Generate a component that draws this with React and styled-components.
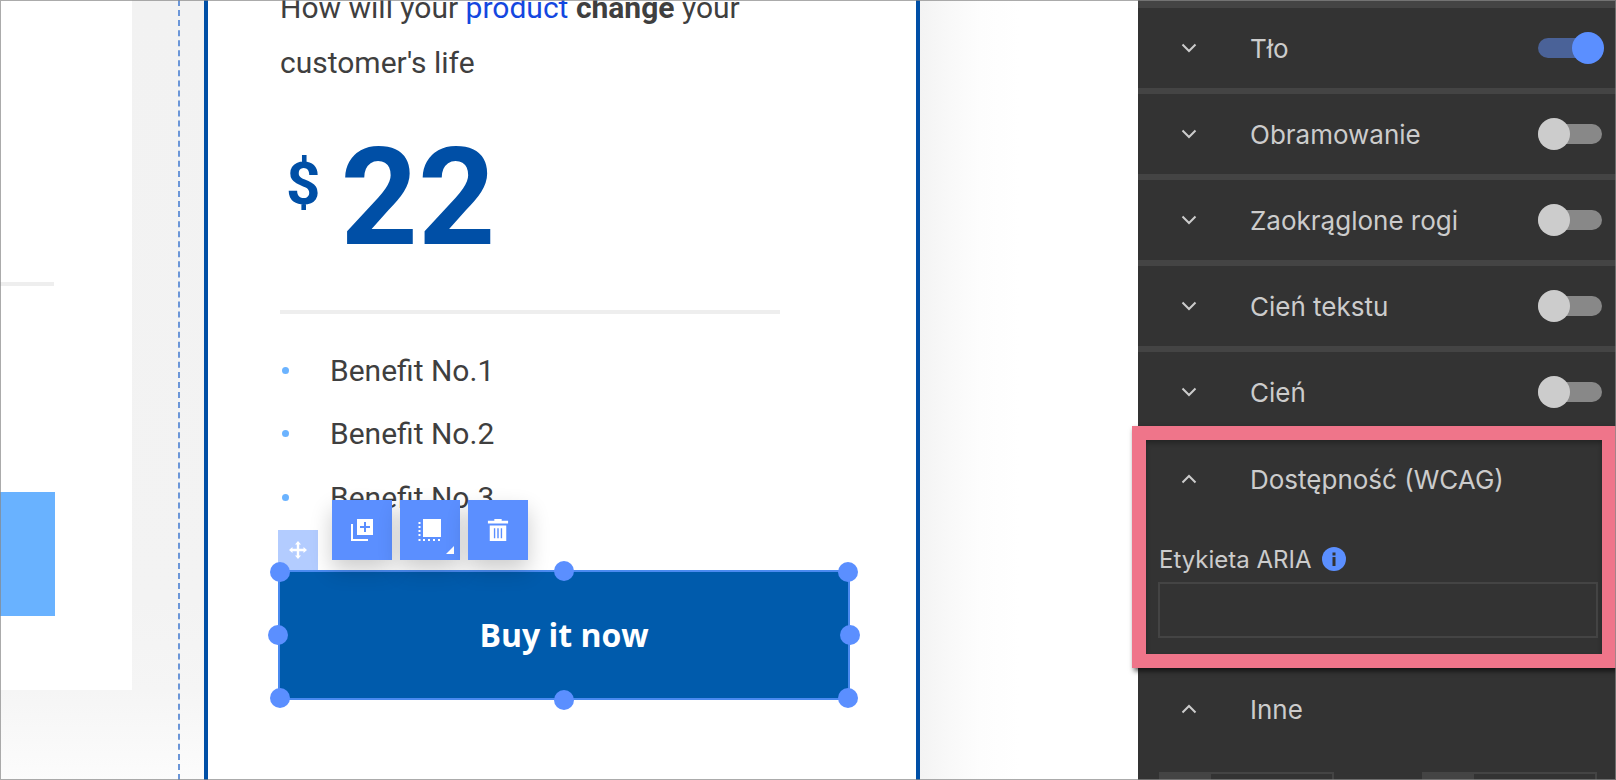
import React from 'react';
import styled, { createGlobalStyle } from 'styled-components';

const Global = createGlobalStyle`
  html, body { margin: 0; padding: 0; background: #fff; }
  #root { width: 1616px; height: 780px; }
`;

const Page = styled.div`
  position: relative;
  display: flex;
  width: 1616px;
  height: 780px;
  overflow: hidden;
`;

const Frame = styled.div`
  position: absolute;
  inset: 0;
  border: 1px solid rgba(136, 136, 136, 0.7);
  pointer-events: none;
  z-index: 10;
`;

const Canvas = styled.main`
  display: flex;
  width: 1138px;
  height: 780px;
  overflow: hidden;
  background: linear-gradient(to bottom, #f2f2f2 0, #f3f3f3 600px, #f5f5f5 690px, #fcfcfc 780px);
`;

const LeftPanel = styled.div`
  width: 132px;
  height: 690px;
  flex: none;
  background: #fff;
`;

const LeftDivider = styled.div`
  width: 54px;
  height: 4px;
  margin-top: 282px;
  background: #eeeeee;
`;

const LeftBlock = styled.div`
  width: 55px;
  height: 124px;
  margin-top: 206px;
  background: #69b2ff;
`;

const Gutter = styled.div`
  width: 72px;
  flex: none;
  padding-left: 46px;
  box-sizing: border-box;
`;

const DashedLine = styled.div`
  width: 0;
  height: 100%;
  border-left: 2px dashed #6b96d8;
`;

const Card = styled.section`
  width: 716px;
  flex: none;
  box-sizing: border-box;
  border-left: 4px solid #004fa6;
  border-right: 4px solid #004fa6;
  background: #fff;
  padding-left: 72px;
  font-family: Roboto, sans-serif;
  color: #3f3f3f;
`;

const Heading = styled.p`
  margin: -19px 0 0;
  width: 480px;
  font-size: 30px;
  line-height: 54.5px;
`;

const Accent = styled.span`
  color: #1447e0;
`;

const Price = styled.div`
  display: flex;
  align-items: flex-start;
  margin-top: 40.5px;
  color: #004fa6;
  font-weight: 700;
`;

const Currency = styled.span`
  margin: 23px 20px 0 6px;
  font-size: 60px;
  line-height: 1;
`;

const Amount = styled.span`
  font-size: 135px;
  line-height: 1;
`;

const Divider = styled.div`
  width: 500px;
  height: 4px;
  margin-top: 44.5px;
  background: #eeeeee;
`;

const Benefits = styled.ul`
  list-style: none;
  margin: 24.5px 0 0;
  padding: 0;
`;

const Benefit = styled.li`
  display: flex;
  align-items: center;
  height: 63.5px;
  font-size: 30px;
`;

const Dot = styled.span`
  width: 7px;
  height: 7px;
  margin: 0 41px 0 2px;
  border-radius: 50%;
  background: #6bb3ff;
`;

const BuyButton = styled.div`
  position: relative;
  width: 572px;
  height: 130px;
  margin: 41px 0 0 -2px;
  padding-bottom: 1px;
  box-sizing: border-box;
  border: 2px solid #4a8af0;
  background: #005bac;
  display: flex;
  align-items: center;
  justify-content: center;
  color: #fff;
  font-family: 'Open Sans', sans-serif;
  font-weight: 700;
  font-size: 32px;
`;

const Toolbar = styled.div`
  position: absolute;
  left: 52px;
  top: -72px;
  display: flex;
  gap: 8px;
`;

const ToolButton = styled.div`
  position: relative;
  width: 60px;
  height: 60px;
  display: flex;
  align-items: center;
  justify-content: center;
  background: #5b8fff;
  box-shadow: 0 10px 22px rgba(0, 0, 0, 0.2);
`;

const CornerMark = styled.span`
  position: absolute;
  right: 6px;
  bottom: 6px;
  width: 0;
  height: 0;
  border-left: 8px solid transparent;
  border-bottom: 8px solid #fff;
`;

const MoveHandle = styled.div`
  position: absolute;
  left: -2px;
  top: -42px;
  width: 40px;
  height: 40px;
  display: flex;
  align-items: center;
  justify-content: center;
  background: #b3ccff;
`;

const Handle = styled.span`
  position: absolute;
  width: 20px;
  height: 20px;
  border-radius: 50%;
  background: #5b8fff;
  left: ${p => p.$x}px;
  top: ${p => p.$y}px;
`;

const Gradient = styled.div`
  flex: 1;
  background: linear-gradient(to right, #f3f3f3 0, #f9f9f9 30px, #fdfdfd 60px, #fff 100px);
`;

const Sidebar = styled.aside`
  position: relative;
  z-index: 5;
  width: 478px;
  height: 780px;
  flex: none;
  background: #333333;
  color: #cccccc;
  font-family: Inter, sans-serif;
`;

const Section = styled.div`
  border-top: ${p => p.$sep}px solid #444444;
`;

const Row = styled.div`
  display: flex;
  align-items: center;
  height: 80px;
  padding-left: 42px;
  font-size: 26px;
`;

const RowLabel = styled.span`
  margin-top: ${p => (p.$flat ? 0 : 1)}px;
`;

const Chevron = styled.svg`
  width: 18px;
  height: 12px;
  margin-right: 52px;
  flex: none;
  fill: none;
  stroke: #cccccc;
  stroke-width: 2;
`;

const Toggle = styled.div`
  position: relative;
  width: 66px;
  height: 32px;
  margin-left: auto;
  margin-right: 12px;
  display: flex;
  align-items: center;
`;

const Track = styled.span`
  width: ${p => (p.$on ? 50 : 64)}px;
  height: 20px;
  border-radius: 10px;
  background: ${p => (p.$on ? '#4a6298' : '#888888')};
`;

const Thumb = styled.span`
  position: absolute;
  top: 0;
  left: ${p => (p.$on ? 34 : 0)}px;
  width: 32px;
  height: 32px;
  border-radius: 50%;
  background: ${p => (p.$on ? '#5b8fff' : '#cccccc')};
`;

const Wcag = styled.div`
  position: relative;
  margin-top: 7px;
`;

const Highlight = styled.div`
  position: absolute;
  left: -6px;
  right: 0;
  top: -13px;
  height: 242px;
  box-sizing: border-box;
  border: 14px solid #ef758a;
  pointer-events: none;
  box-shadow: 2px 3px 5px rgba(0, 0, 0, 0.65), inset 0 3px 5px rgba(0, 0, 0, 0.3);
`;

const FieldLabel = styled.div`
  display: flex;
  align-items: center;
  gap: 10px;
  height: 24px;
  margin: 28px 0 0 21px;
  font-size: 24px;
`;

const FieldText = styled.span`
  margin-top: 1px;
`;

const Info = styled.svg`
  width: 24px;
  height: 24px;
  flex: none;
`;

const TextField = styled.div`
  width: 440px;
  height: 56px;
  margin: 11px 0 31px 20px;
  box-sizing: border-box;
  border: 2px solid #444444;
`;

const Units = styled.div`
  display: flex;
  gap: 88px;
  margin: 23px 0 0 21px;
`;

const Unit = styled.div`
  display: flex;
  width: 175px;
  height: 40px;
  box-sizing: border-box;
  border: 2px solid #444444;
`;

const UnitLabel = styled.div`
  width: 50px;
  background: #444444;
`;

const ChevronIcon = ({ up }) => (
  <Chevron viewBox="0 0 18 12">
    <path d={up ? 'M2.5 9.5 L9 3 L15.5 9.5' : 'M2.5 2.5 L9 9 L15.5 2.5'} />
  </Chevron>
);

const Switch = ({ on }) => (
  <Toggle>
    <Track $on={on} />
    <Thumb $on={on} />
  </Toggle>
);

const rows = [
  { label: 'Tło', on: true, sep: 8 },
  { label: 'Obramowanie', sep: 6 },
  { label: 'Zaokrąglone rogi', sep: 6 },
  { label: 'Cień tekstu', sep: 6 },
  { label: 'Cień', sep: 6 },
];

const MoveIcon = () => (
  <svg width="20" height="20" viewBox="0 0 20 20" fill="#fff">
    <path d="M10 1 L13 4.5 H11.2 V8.8 H15.5 V7 L19 10 L15.5 13 V11.2 H11.2 V15.5 H13 L10 19 L7 15.5 H8.8 V11.2 H4.5 V13 L1 10 L4.5 7 V8.8 H8.8 V4.5 H7 Z" />
  </svg>
);

const DuplicateIcon = () => (
  <svg width="24" height="24" viewBox="0 0 24 24" fill="#fff">
    <path fillRule="evenodd" d="M7 1 H23 V17 H7 Z M14 4 V8 H10 V10 H14 V14 H16 V10 H20 V8 H16 V4 Z" />
    <path d="M1 6 H3 V21 H18 V23 H1 Z" />
  </svg>
);

const BackdropIcon = () => (
  <svg width="24" height="24" viewBox="0 0 24 24" fill="#fff">
    <rect x="5" y="1" width="18" height="18" />
    <rect x="0.5" y="4" width="2" height="2" />
    <rect x="0.5" y="8" width="2" height="2" />
    <rect x="0.5" y="12" width="2" height="2" />
    <rect x="0.5" y="16" width="2" height="2" />
    <rect x="0.5" y="21" width="2" height="2" />
    <rect x="5" y="21" width="2" height="2" />
    <rect x="10" y="21" width="2" height="2" />
    <rect x="15" y="21" width="2" height="2" />
    <rect x="20" y="21" width="2" height="2" />
  </svg>
);

const TrashIcon = () => (
  <svg width="22" height="24" viewBox="0 0 24 26" fill="#fff">
    <path d="M8 1 H16 V3 H23 V6 H1 V3 H8 Z" />
    <path
      fillRule="evenodd"
      d="M3 8 H21 V25 H3 Z M7.5 11 V22 H9 V11 Z M11.2 11 V22 H12.8 V11 Z M15 11 V22 H16.5 V11 Z"
    />
  </svg>
);

export default function App() {
  return (
    <Page>
      <Global />
      <Canvas>
        <LeftPanel>
          <LeftDivider />
          <LeftBlock />
        </LeftPanel>
        <Gutter>
          <DashedLine />
        </Gutter>
        <Card>
          <Heading>
            How will your <Accent>product</Accent> <b>change</b> your customer's life
          </Heading>
          <Price>
            <Currency>$</Currency>
            <Amount>22</Amount>
          </Price>
          <Divider />
          <Benefits>
            <Benefit><Dot />Benefit No.1</Benefit>
            <Benefit><Dot />Benefit No.2</Benefit>
            <Benefit><Dot />Benefit No.3</Benefit>
          </Benefits>
          <BuyButton>
            Buy it now
            <MoveHandle><MoveIcon /></MoveHandle>
            <Toolbar>
              <ToolButton><DuplicateIcon /></ToolButton>
              <ToolButton><BackdropIcon /><CornerMark /></ToolButton>
              <ToolButton><TrashIcon /></ToolButton>
            </Toolbar>
            <Handle $x={-10} $y={-10} />
            <Handle $x={274} $y={-11} />
            <Handle $x={558} $y={-10} />
            <Handle $x={-12} $y={53} />
            <Handle $x={560} $y={53} />
            <Handle $x={-10} $y={116} />
            <Handle $x={274} $y={118} />
            <Handle $x={558} $y={116} />
          </BuyButton>
        </Card>
        <Gradient />
      </Canvas>
      <Sidebar>
        {rows.map(r => (
          <Section key={r.label} $sep={r.sep}>
            <Row>
              <ChevronIcon />
              <RowLabel>{r.label}</RowLabel>
              <Switch on={r.on} />
            </Row>
          </Section>
        ))}
        <Wcag>
          <Row>
            <ChevronIcon up />
            <RowLabel $flat>Dostępność (WCAG)</RowLabel>
          </Row>
          <FieldLabel>
            <FieldText>Etykieta ARIA</FieldText>
            <Info viewBox="0 0 24 24">
              <circle cx="12" cy="12" r="12" fill="#5b8fff" />
              <rect x="10.5" y="10" width="3" height="9" fill="#333" />
              <rect x="10.5" y="5.5" width="3" height="3" fill="#333" />
            </Info>
          </FieldLabel>
          <TextField />
          <Highlight />
        </Wcag>
        <Row>
          <ChevronIcon up />
          <RowLabel $flat>Inne</RowLabel>
        </Row>
        <Units>
          <Unit><UnitLabel /></Unit>
          <Unit><UnitLabel /></Unit>
        </Units>
      </Sidebar>
      <Frame />
    </Page>
  );
}
